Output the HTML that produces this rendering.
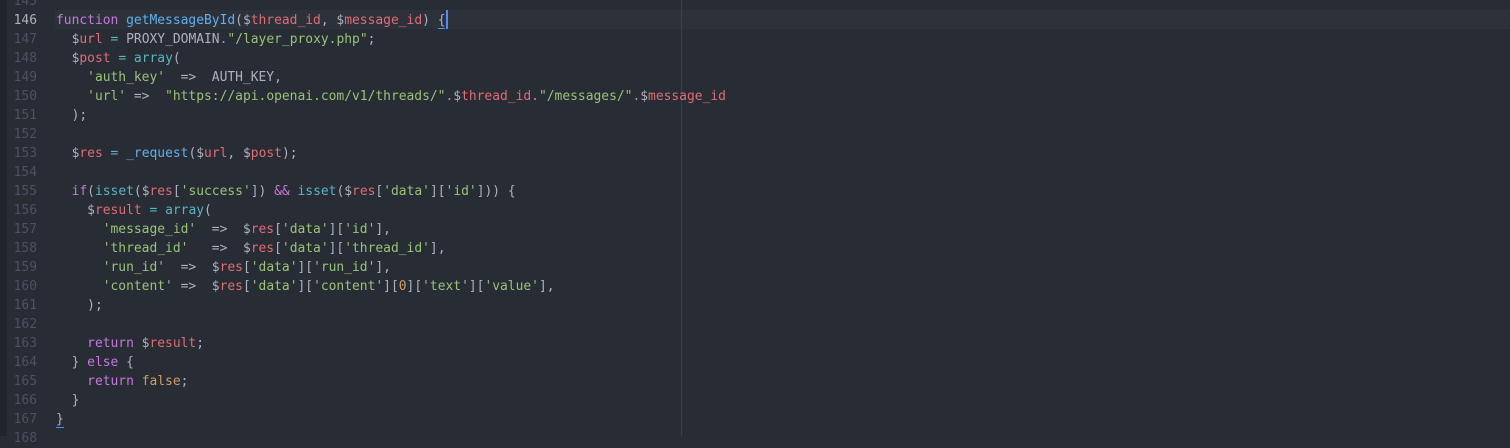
<!DOCTYPE html>
<html><head><meta charset="utf-8"><style>
html,body{margin:0;padding:0;width:1510px;height:436px;overflow:hidden;background:#282c34;}
.strip{position:absolute;left:0;top:0;width:7px;height:436px;background:#21252b;}
.cur{position:absolute;left:55px;right:0;top:9.5px;height:19px;background:#2c313a;}
.guide{position:absolute;left:681px;top:0;width:1px;height:436px;background:#3b4048;}
.code{position:absolute;left:0;top:-8.5px;font-family:"DejaVu Sans Mono","Liberation Mono",monospace;font-size:12.95px;line-height:19px;color:#abb2bf;}
.l{height:19px;position:relative;white-space:pre;}
.n{position:absolute;left:0;width:37px;text-align:right;color:#4b5263;}
.n.a{color:#abb2bf;}
.t{position:absolute;left:56px;}
.k{color:#c678dd}.f{color:#61afef}.v{color:#e06c75}.s{color:#98c379}.c{color:#56b6c2}.o{color:#d19a66}
.u{border-bottom:1px solid #528bff;}
.caret{position:absolute;left:446px;top:10px;width:2px;height:19px;background:#528bff;}
</style></head><body>
<div class="strip"></div>
<div class="cur"></div>
<div class="guide"></div>
<div class="code"><div class="l"><span class="n">145</span></div><div class="l"><span class="n a">146</span><span class="t"><span class="k">function</span> <span class="f">getMessageById</span>($<span class="v">thread_id</span>, $<span class="v">message_id</span>) <span class="u">{</span></span></div><div class="l"><span class="n">147</span><span class="t">  $<span class="v">url</span> <span class="c">=</span> PROXY_DOMAIN<span class="k">.</span><span class="s">"/layer_proxy.php"</span>;</span></div><div class="l"><span class="n">148</span><span class="t">  $<span class="v">post</span> <span class="c">=</span> <span class="c">array</span>(</span></div><div class="l"><span class="n">149</span><span class="t">    <span class="s">'auth_key'</span>  =&gt;  AUTH_KEY,</span></div><div class="l"><span class="n">150</span><span class="t">    <span class="s">'url'</span> =&gt;  <span class="s">"https://api.openai.com/v1/threads/"</span><span class="k">.</span>$<span class="v">thread_id</span><span class="k">.</span><span class="s">"/messages/"</span><span class="k">.</span>$<span class="v">message_id</span></span></div><div class="l"><span class="n">151</span><span class="t">  );</span></div><div class="l"><span class="n">152</span></div><div class="l"><span class="n">153</span><span class="t">  $<span class="v">res</span> <span class="c">=</span> <span class="f">_request</span>($<span class="v">url</span>, $<span class="v">post</span>);</span></div><div class="l"><span class="n">154</span></div><div class="l"><span class="n">155</span><span class="t">  <span class="k">if</span>(<span class="c">isset</span>($<span class="v">res</span>[<span class="s">'success'</span>]) <span class="k">&amp;&amp;</span> <span class="c">isset</span>($<span class="v">res</span>[<span class="s">'data'</span>][<span class="s">'id'</span>])) {</span></div><div class="l"><span class="n">156</span><span class="t">    $<span class="v">result</span> <span class="c">=</span> <span class="c">array</span>(</span></div><div class="l"><span class="n">157</span><span class="t">      <span class="s">'message_id'</span>  =&gt;  $<span class="v">res</span>[<span class="s">'data'</span>][<span class="s">'id'</span>],</span></div><div class="l"><span class="n">158</span><span class="t">      <span class="s">'thread_id'</span>   =&gt;  $<span class="v">res</span>[<span class="s">'data'</span>][<span class="s">'thread_id'</span>],</span></div><div class="l"><span class="n">159</span><span class="t">      <span class="s">'run_id'</span>  =&gt;  $<span class="v">res</span>[<span class="s">'data'</span>][<span class="s">'run_id'</span>],</span></div><div class="l"><span class="n">160</span><span class="t">      <span class="s">'content'</span> =&gt;  $<span class="v">res</span>[<span class="s">'data'</span>][<span class="s">'content'</span>][<span class="o">0</span>][<span class="s">'text'</span>][<span class="s">'value'</span>],</span></div><div class="l"><span class="n">161</span><span class="t">    );</span></div><div class="l"><span class="n">162</span></div><div class="l"><span class="n">163</span><span class="t">    <span class="k">return</span> $<span class="v">result</span>;</span></div><div class="l"><span class="n">164</span><span class="t">  } <span class="k">else</span> {</span></div><div class="l"><span class="n">165</span><span class="t">    <span class="k">return</span> <span class="o">false</span>;</span></div><div class="l"><span class="n">166</span><span class="t">  }</span></div><div class="l"><span class="n">167</span><span class="t"><span class="u">}</span></span></div><div class="l"><span class="n">168</span></div></div>
<div class="caret"></div>
</body></html>
